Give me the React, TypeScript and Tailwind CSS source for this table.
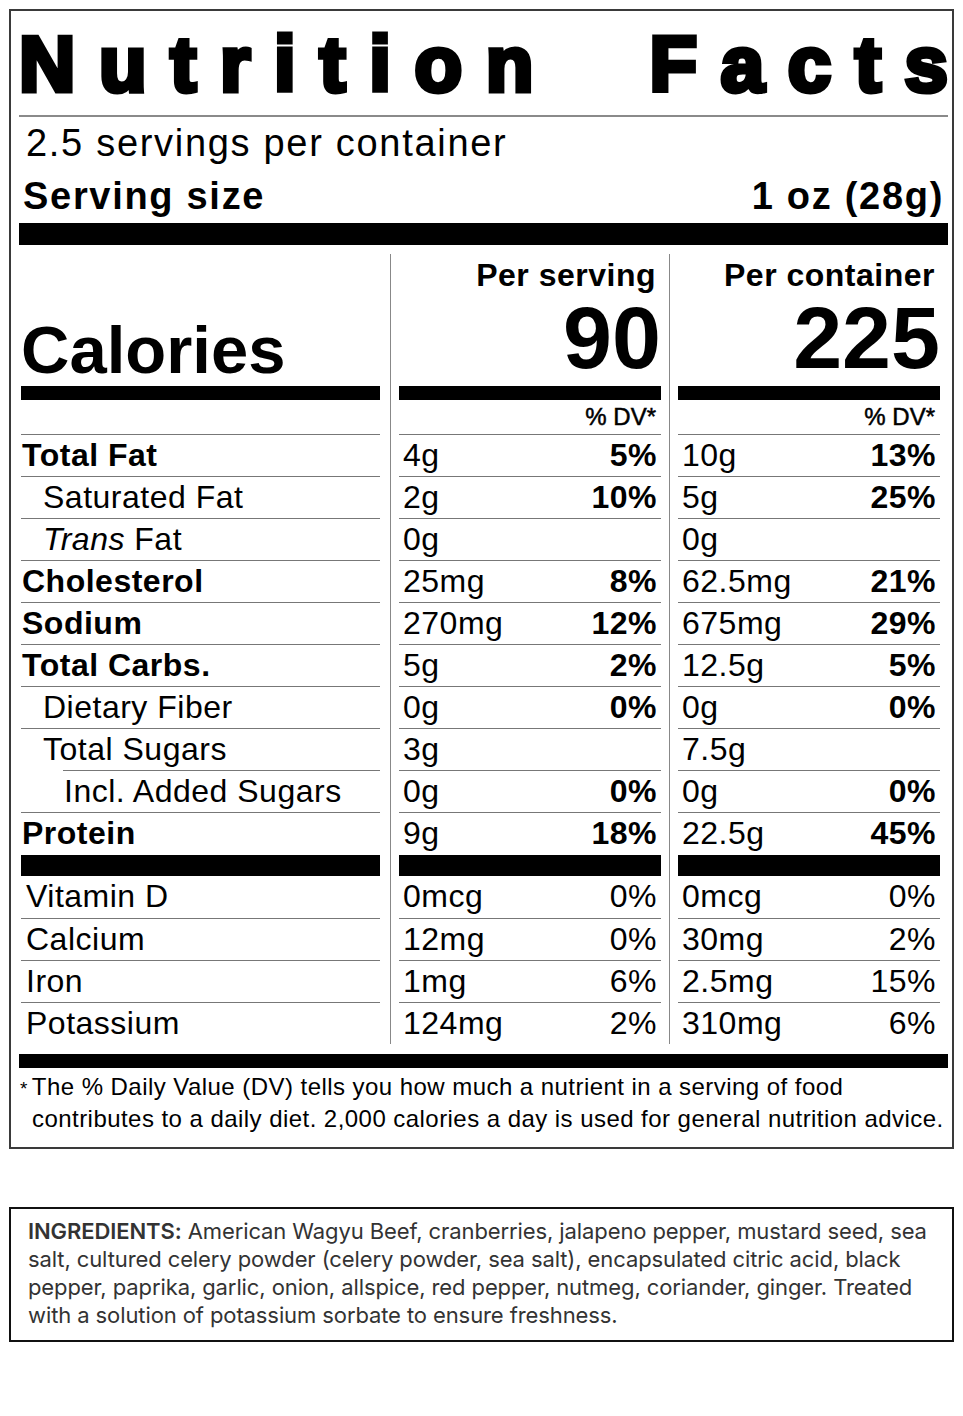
import React from "react"

type Nutrient = {
  label: React.ReactNode
  bold?: boolean
  indent?: 0 | 1 | 2
  s: string
  sp: string
  c: string
  cp: string
}

const nutrients: Nutrient[] = [
  { label: "Total Fat", bold: true, s: "4g", sp: "5%", c: "10g", cp: "13%" },
  { label: "Saturated Fat", indent: 1, s: "2g", sp: "10%", c: "5g", cp: "25%" },
  {
    label: (
      <>
        <i>Trans</i> Fat
      </>
    ),
    indent: 1,
    s: "0g",
    sp: "",
    c: "0g",
    cp: "",
  },
  { label: "Cholesterol", bold: true, s: "25mg", sp: "8%", c: "62.5mg", cp: "21%" },
  { label: "Sodium", bold: true, s: "270mg", sp: "12%", c: "675mg", cp: "29%" },
  { label: "Total Carbs.", bold: true, s: "5g", sp: "2%", c: "12.5g", cp: "5%" },
  { label: "Dietary Fiber", indent: 1, s: "0g", sp: "0%", c: "0g", cp: "0%" },
  { label: "Total Sugars", indent: 1, s: "3g", sp: "", c: "7.5g", cp: "" },
  { label: "Incl. Added Sugars", indent: 2, s: "0g", sp: "0%", c: "0g", cp: "0%" },
  { label: "Protein", bold: true, s: "9g", sp: "18%", c: "22.5g", cp: "45%" },
]

const vitamins = [
  { label: "Vitamin D", s: "0mcg", sp: "0%", c: "0mcg", cp: "0%" },
  { label: "Calcium", s: "12mg", sp: "0%", c: "30mg", cp: "2%" },
  { label: "Iron", s: "1mg", sp: "6%", c: "2.5mg", cp: "15%" },
  { label: "Potassium", s: "124mg", sp: "2%", c: "310mg", cp: "6%" },
]

const rowText = "text-[32px] tracking-[0.5px] leading-[41px]"

function LeftColumn() {
  return (
    <div className="w-[359px] flex flex-col">
      {/* calories header */}
      <div className="h-[132px] flex flex-col justify-end pb-[3px]">
        <div className="text-[67px] font-bold leading-none">Calories</div>
      </div>
      <div className="h-[14px] bg-black" />
      <div className="h-[34px]" />
      {nutrients.map((n, i) => (
        <div
          key={i}
          className={`h-[42px] border-t border-[#777] ${rowText} ${n.bold ? "font-bold" : ""} ${
            n.indent === 2 ? "ml-[42px] pl-[1px]" : n.indent === 1 ? "pl-[22px]" : "pl-[1px]"
          }`}
        >
          {n.label}
        </div>
      ))}
      <div className="mt-[1px] h-[21px] bg-black" />
      {vitamins.map((v, i) => (
        <div key={i} className={`h-[42px] ${i > 0 ? "border-t border-[#777]" : ""} pl-[5px] ${rowText}`}>
          {v.label}
        </div>
      ))}
    </div>
  )
}

function ValueColumn({ title, calories, per }: { title: string; calories: string; per: "s" | "c" }) {
  return (
    <div className="w-[262px] flex flex-col">
      <div className="h-[132px] flex flex-col items-end pt-[5px]">
        <div className="text-[32px] font-bold leading-none tracking-[0.5px] pr-[5px]">{title}</div>
        <div className="mt-[2.5px] text-[88px] font-bold leading-none">{calories}</div>
      </div>
      <div className="h-[14px] bg-black" />
      <div className="h-[34px] leading-[34px] text-[24px] text-right pr-[5px] [-webkit-text-stroke:0.5px_black]">
        % DV*
      </div>
      {nutrients.map((n, i) => (
        <div key={i} className={`h-[42px] border-t border-[#777] flex justify-between pl-[4px] pr-[4px] ${rowText}`}>
          <span>{per === "s" ? n.s : n.c}</span>
          <span className="font-bold">{per === "s" ? n.sp : n.cp}</span>
        </div>
      ))}
      <div className="mt-[1px] h-[21px] bg-black" />
      {vitamins.map((v, i) => (
        <div
          key={i}
          className={`h-[42px] ${i > 0 ? "border-t border-[#777]" : ""} flex justify-between pl-[4px] pr-[4px] ${rowText}`}
        >
          <span>{per === "s" ? v.s : v.c}</span>
          <span>{per === "s" ? v.sp : v.cp}</span>
        </div>
      ))}
    </div>
  )
}

export default function App() {
  return (
    <div className="min-h-[1416px] bg-white pt-[9px] pl-[9px] font-['Liberation_Sans',Arial,sans-serif] text-black">
      <div className="w-[945px] border-2 border-[#3a3a3a] pl-[8px] pr-[4px]">
        {/* title */}
        <div className="mt-[11px] h-[84px] flex justify-between items-center text-[78px] font-bold leading-none [-webkit-text-stroke:5px_black]">
          <span className="tracking-[23.7px]">Nutrition</span>
          <span>
            <span className="tracking-[23.7px]">Fact</span>s
          </span>
        </div>
        <div className="mt-[9px] h-[2px] bg-[#8a8a8a]" />

        <div className="h-[53px] leading-[53px] text-[38px] tracking-[1.7px] pl-[7px]">2.5 servings per container</div>
        <div className="h-[53px] leading-[53px] text-[38px] tracking-[1.7px] font-bold flex justify-between pl-[4px] pr-[4px]">
          <span>Serving size</span>
          <span>1 oz (28g)</span>
        </div>
        <div className="h-[22px] bg-black" />

        {/* main table */}
        <div className="mt-[9px] flex pl-[2px]">
          <LeftColumn />
          <div className="w-[19px] flex">
            <div className="ml-[10px] w-px bg-[#888]" />
          </div>
          <ValueColumn title="Per serving" calories="90" per="s" />
          <div className="w-[17px] flex">
            <div className="ml-[8px] w-px bg-[#888]" />
          </div>
          <ValueColumn title="Per container" calories="225" per="c" />
        </div>

        <div className="mt-[10px] h-[14px] bg-black" />
        <p className="pt-[4px] pb-[13px] pl-[13px] [text-indent:-12px] text-[24px] leading-[30px] tracking-[0.45px]">
          <span className="text-[19px] mr-[4px]">*</span>The % Daily Value (DV) tells you how much a nutrient in a
          serving of food contributes to a daily diet. 2,000 calories a day is used for general nutrition advice.
        </p>
      </div>

      {/* ingredients */}
      <div className="mt-[58px] w-[945px] border-2 border-[#111] pt-[8px] pb-[11px] pl-[17px] pr-[14px]">
        <p className="font-['Inter',sans-serif] text-[22px] leading-[28px] tracking-[-0.1px] text-[#333]">
          <span className="font-semibold">INGREDIENTS:</span> American Wagyu Beef, cranberries, jalapeno pepper,
          mustard seed, sea salt, cultured celery powder (celery powder, sea salt), encapsulated citric acid, black
          pepper, paprika, garlic, onion, allspice, red pepper, nutmeg, coriander, ginger. Treated with a solution of
          potassium sorbate to ensure freshness.
        </p>
      </div>
    </div>
  )
}
